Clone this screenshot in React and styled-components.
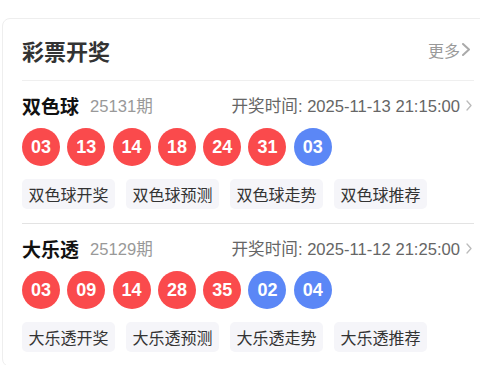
import React from 'react'
import styled, { createGlobalStyle } from 'styled-components'

const GlobalStyle = createGlobalStyle`
  html, body {
    margin: 0;
    padding: 0;
    background: #fff;
    overflow: hidden;
  }
  body {
    font-family: "Liberation Sans", "Noto Sans CJK SC", sans-serif;
  }
`;

const Card = styled.div`
  width: 492px;
  margin: 18px 0 0 2px;
  padding: 0 19px;
  box-sizing: border-box;
  border: 1px solid #eee;
  border-radius: 8px;
  background: #fff;
`;

const Header = styled.div`
  display: flex;
  align-items: center;
  justify-content: space-between;
  height: 61px;
  border-bottom: 1px solid #efefef;
`;

const Title = styled.h2`
  margin: 0;
  font-size: 22px;
  font-weight: 700;
  color: #333;
`;

const More = styled.a`
  display: flex;
  align-items: center;
  gap: 2px;
  font-size: 16px;
  color: #999;
  padding-right: 4px;
  cursor: pointer;
`;

const Section = styled.div`
  padding: 12px 0 14px;
  border-bottom: ${p => (p.$last ? 'none' : '1px solid #e3e3e3')};
`;

const InfoRow = styled.div`
  display: flex;
  align-items: center;
  height: 24px;
`;

const Name = styled.span`
  font-size: 19px;
  font-weight: 700;
  color: #111;
`;

const Issue = styled.span`
  margin-left: 11px;
  font-size: 16.6px;
  color: #999;
`;

const DrawTime = styled.span`
  margin-left: auto;
  display: flex;
  align-items: center;
  gap: 6px;
  font-size: 16.6px;
  color: #666;
  padding-right: 2px;
`;

const Balls = styled.div`
  display: flex;
  gap: 7.3px;
  margin-top: 11px;
`;

const Ball = styled.span`
  width: 38px;
  height: 38px;
  border-radius: 50%;
  display: flex;
  align-items: center;
  justify-content: center;
  background: ${p => (p.$blue ? '#5b87f6' : '#fa4a4c')};
  color: #fff;
  font-size: 18px;
  font-weight: 700;
`;

const Tags = styled.div`
  display: flex;
  gap: 11px;
  margin-top: 13px;
`;

const Tag = styled.span`
  height: 30px;
  padding: 0 6.5px;
  display: flex;
  align-items: center;
  background: #f5f5f9;
  border-radius: 5px;
  font-size: 16px;
  color: #333;
`;

const Chevron = ({ w, h, color, stroke }) => (
  <svg width={w} height={h} viewBox={`0 0 ${w} ${h}`} fill="none">
    <path
      d={`M1 1 L${w - 1} ${h / 2} L1 ${h - 1}`}
      stroke={color}
      strokeWidth={stroke}
      strokeLinecap="round"
      strokeLinejoin="round"
    />
  </svg>
);

const lotteries = [
  {
    name: '双色球',
    issue: '25131期',
    time: '2025-11-13 21:15:00',
    red: ['03', '13', '14', '18', '24', '31'],
    blue: ['03'],
  },
  {
    name: '大乐透',
    issue: '25129期',
    time: '2025-11-12 21:25:00',
    red: ['03', '09', '14', '28', '35'],
    blue: ['02', '04'],
  },
];

const links = ['开奖', '预测', '走势', '推荐'];

export default function App() {
  return (
    <>
      <GlobalStyle />
      <Card>
        <Header>
          <Title>彩票开奖</Title>
          <More>
            更多
            <Chevron w={8} h={13} color="#aaa" stroke={2} />
          </More>
        </Header>
        {lotteries.map((l, i) => (
          <Section key={l.name} $last={i === lotteries.length - 1}>
            <InfoRow>
              <Name>{l.name}</Name>
              <Issue>{l.issue}</Issue>
              <DrawTime>
                开奖时间: {l.time}
                <Chevron w={6} h={11} color="#bbb" stroke={1.3} />
              </DrawTime>
            </InfoRow>
            <Balls>
              {l.red.map((n, k) => (
                <Ball key={'r' + k}>{n}</Ball>
              ))}
              {l.blue.map((n, k) => (
                <Ball key={'b' + k} $blue>
                  {n}
                </Ball>
              ))}
            </Balls>
            <Tags>
              {links.map(t => (
                <Tag key={t}>{l.name + t}</Tag>
              ))}
            </Tags>
          </Section>
        ))}
      </Card>
    </>
  );
}
